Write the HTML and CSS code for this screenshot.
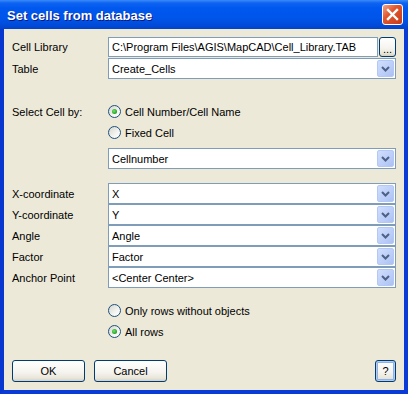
FILE: index.html
```html
<!DOCTYPE html>
<html lang="en">
  <head>
    <meta charset="UTF-8" />
    <title>Set cells from database</title>
    <link rel="stylesheet" href="styles.css">
  </head>
  <body>
    <div class="window">
      <div class="titlebar">
        <span class="title">Set cells from database</span>
        <span class="close">
          <svg width="13" height="13" viewBox="0 0 13 13">
            <path d="M2 2 L11 11 M11 2 L2 11" stroke="#fff" stroke-width="2.4" stroke-linecap="square" />
          </svg>
        </span>
      </div>
      <div class="frame">
        <div class="client">
          <div class="row row-lib">
            <span class="lbl">Cell Library</span>
            <div class="field split">
              <div class="edit">C:\Program Files\AGIS\MapCAD\Cell_Library.TAB</div>
              <span class="xpbtn browse">...</span>
            </div>
          </div>
          <div class="row row-table">
            <span class="lbl">Table</span>
            <div class="field combo">
              <span class="combo-text">Create_Cells</span>
              <span class="drop"><svg width="9" height="6" viewBox="0 0 9 6"><path d="M1 1 L4.5 4.5 L8 1" fill="none" stroke="#4D6185" stroke-width="2" /></svg></span>
            </div>
          </div>

          <div class="row row-select">
            <span class="lbl">Select Cell by:</span>
            <div class="field radio"><span class="dot checked"></span>Cell Number/Cell Name</div>
          </div>
          <div class="row">
            <span class="lbl"></span>
            <div class="field radio"><span class="dot"></span>Fixed Cell</div>
          </div>
          <div class="row row-cellnum">
            <span class="lbl"></span>
            <div class="field combo">
              <span class="combo-text">Cellnumber</span>
              <span class="drop"><svg width="9" height="6" viewBox="0 0 9 6"><path d="M1 1 L4.5 4.5 L8 1" fill="none" stroke="#4D6185" stroke-width="2" /></svg></span>
            </div>
          </div>

          <div class="coords">
            <div class="row">
              <span class="lbl">X-coordinate</span>
              <div class="field combo">
                <span class="combo-text">X</span>
                <span class="drop"><svg width="9" height="6" viewBox="0 0 9 6"><path d="M1 1 L4.5 4.5 L8 1" fill="none" stroke="#4D6185" stroke-width="2" /></svg></span>
              </div>
            </div>
            <div class="row">
              <span class="lbl">Y-coordinate</span>
              <div class="field combo">
                <span class="combo-text">Y</span>
                <span class="drop"><svg width="9" height="6" viewBox="0 0 9 6"><path d="M1 1 L4.5 4.5 L8 1" fill="none" stroke="#4D6185" stroke-width="2" /></svg></span>
              </div>
            </div>
            <div class="row">
              <span class="lbl">Angle</span>
              <div class="field combo">
                <span class="combo-text">Angle</span>
                <span class="drop"><svg width="9" height="6" viewBox="0 0 9 6"><path d="M1 1 L4.5 4.5 L8 1" fill="none" stroke="#4D6185" stroke-width="2" /></svg></span>
              </div>
            </div>
            <div class="row">
              <span class="lbl">Factor</span>
              <div class="field combo">
                <span class="combo-text">Factor</span>
                <span class="drop"><svg width="9" height="6" viewBox="0 0 9 6"><path d="M1 1 L4.5 4.5 L8 1" fill="none" stroke="#4D6185" stroke-width="2" /></svg></span>
              </div>
            </div>
            <div class="row">
              <span class="lbl">Anchor Point</span>
              <div class="field combo">
                <span class="combo-text">&lt;Center Center&gt;</span>
                <span class="drop"><svg width="9" height="6" viewBox="0 0 9 6"><path d="M1 1 L4.5 4.5 L8 1" fill="none" stroke="#4D6185" stroke-width="2" /></svg></span>
              </div>
            </div>
          </div>

          <div class="row row-rows">
            <span class="lbl"></span>
            <div class="field radio"><span class="dot"></span>Only rows without objects</div>
          </div>
          <div class="row">
            <span class="lbl"></span>
            <div class="field radio"><span class="dot checked"></span>All rows</div>
          </div>

          <div class="buttons">
            <span class="xpbtn push">OK</span>
            <span class="xpbtn push">Cancel</span>
            <span class="xpbtn help">?</span>
          </div>
        </div>
      </div>
    </div>
  </body>
</html>
```

FILE: styles.css
```css
body {
  margin: 0;
  background: #fff;
  font-family: "Liberation Sans", Arial, sans-serif;
  font-size: 11px;
  color: #000;
}
.window {
  width: 408px;
  height: 394px;
  display: flex;
  flex-direction: column;
}
.titlebar {
  height: 29px;
  flex: none;
  display: flex;
  align-items: center;
  padding: 0 5px 0 7px;
  background: linear-gradient(#3b8cf8 0, #0e63f1 3px, #0058ee 8px, #0055ea 18px, #004ddc 24px, #0043cc 29px);
}
.title {
  flex: 1;
  color: #fff;
  font-weight: bold;
  font-size: 13px;
  text-shadow: 1px 1px #0a1883;
  padding-top: 1px;
}
.close {
  width: 19px;
  height: 19px;
  border: 1px solid #fff;
  border-radius: 3px;
  background: linear-gradient(135deg, #f0a68c, #e0562e 40%, #c63c17);
  display: flex;
  align-items: center;
  justify-content: center;
}
.frame {
  flex: 1;
  border: 4px solid #0a3bd6;
  border-top: none;
  border-left-color: #0837d0;
}
.client {
  height: 100%;
  box-sizing: border-box;
  background: #ece9d8;
  padding: 8px 8px 0 8px;
}
.row {
  display: flex;
  align-items: center;
  height: 21px;
}
.lbl {
  width: 96px;
  flex: none;
}
.field {
  width: 288px;
  height: 21px;
  box-sizing: border-box;
}
.split {
  display: flex;
  gap: 1px;
  height: 20px;
}
.edit {
  flex: 1;
  border: 1px solid #7f9db9;
  background: #fff;
  padding: 0 3px;
  line-height: 18px;
  white-space: nowrap;
  overflow: hidden;
}
.xpbtn {
  box-sizing: border-box;
  border: 1px solid #003c74;
  border-radius: 3px;
  background: linear-gradient(#ffffff, #f5f4ef 55%, #e9e6da 85%, #d6d0c5);
  display: flex;
  align-items: center;
  justify-content: center;
}
.browse {
  width: 17px;
  padding-top: 4px;
}
.combo {
  display: flex;
  align-items: center;
  border: 1px solid #7f9db9;
  background: #fff;
  padding: 1px;
}
.combo-text {
  flex: 1;
  padding-left: 2px;
}
.drop {
  width: 17px;
  height: 17px;
  box-sizing: border-box;
  border: 1px solid #b4c8f6;
  border-radius: 2px;
  background: linear-gradient(135deg, #d0defd, #b8cbf7 70%, #aac0f2);
  display: flex;
  align-items: center;
  justify-content: center;
}
.row-lib {
  height: 20px;
}
.row-table {
  margin-top: 1px;
}
.row-select {
  margin-top: 22px;
}
.row-cellnum {
  margin-top: 5px;
}
.coords {
  margin-top: 14px;
}
.row-rows {
  margin-top: 12px;
}
.radio {
  display: flex;
  align-items: center;
  gap: 4px;
}
.dot {
  width: 13px;
  height: 13px;
  box-sizing: border-box;
  border: 1px solid #1c5180;
  border-radius: 50%;
  background: linear-gradient(135deg, #d6d5cf, #f4f4f0 60%, #ffffff);
  display: flex;
  align-items: center;
  justify-content: center;
}
.dot.checked::after {
  content: "";
  width: 5px;
  height: 5px;
  border-radius: 50%;
  background: radial-gradient(circle at 40% 40%, #6ee36a, #21a121 70%, #1a8b1a);
}
.buttons {
  display: flex;
  gap: 9px;
  margin-top: 18px;
}
.push {
  width: 73px;
  height: 22px;
}
.help {
  width: 21px;
  height: 22px;
  margin-left: auto;
  box-shadow: inset 0 0 0 1px #b4cdef, inset 0 0 0 2px #8eb2e6;
}
```
